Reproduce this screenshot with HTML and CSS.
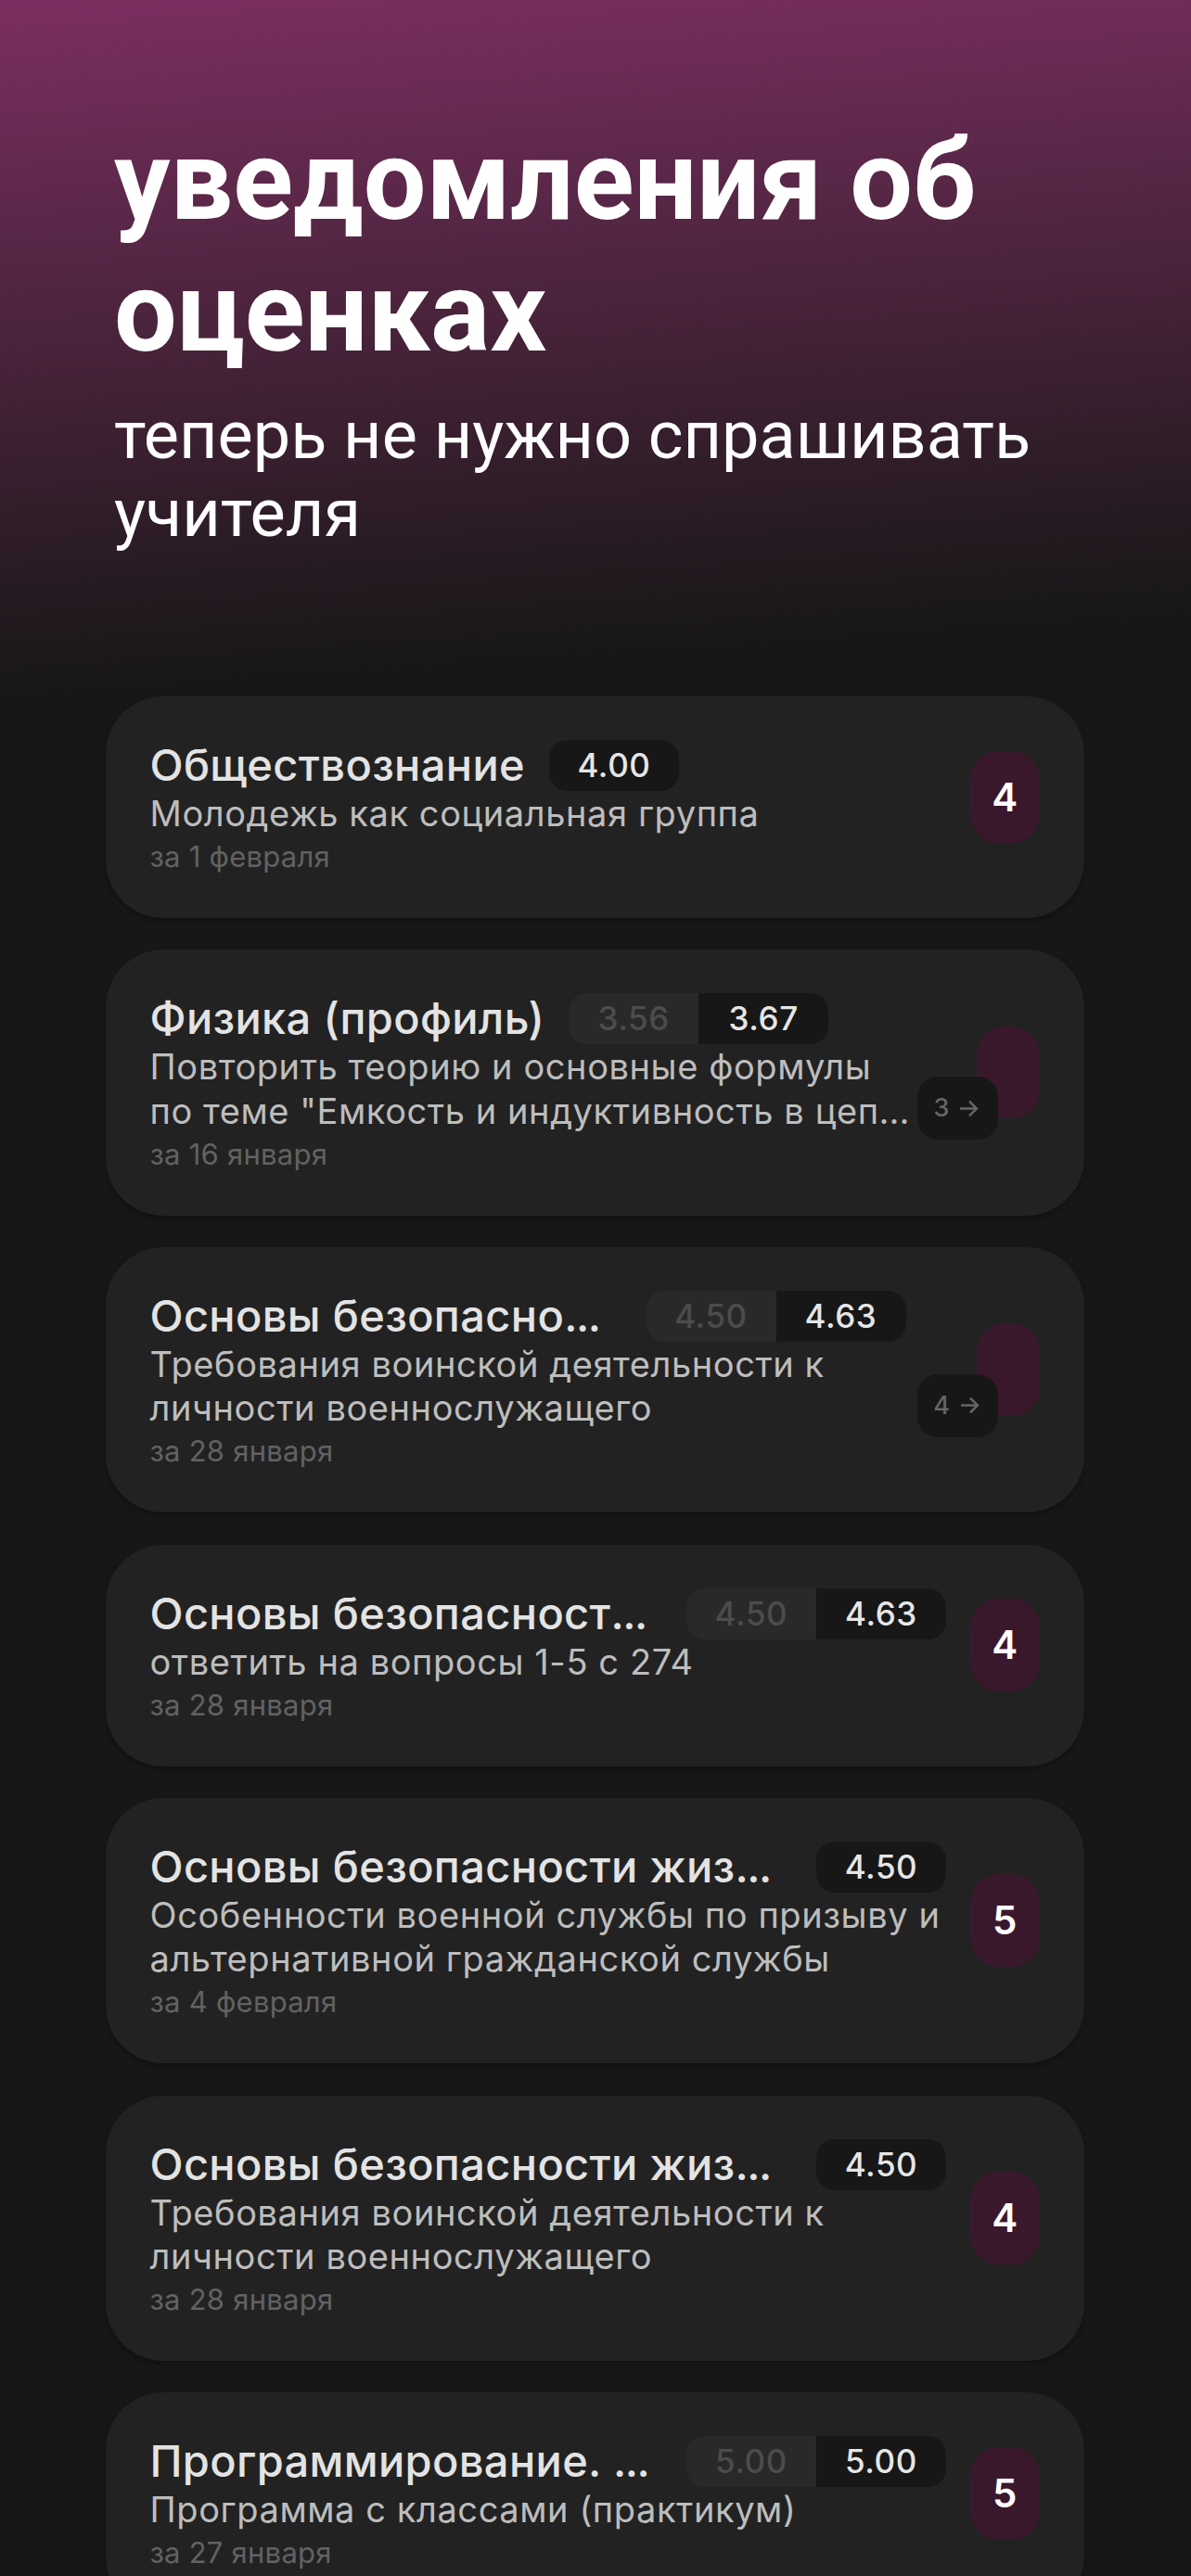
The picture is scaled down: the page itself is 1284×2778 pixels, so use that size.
FILE: index.html
```html
<!DOCTYPE html>
<html lang="ru">
<head>
<meta charset="utf-8">
<title>Уведомления об оценках</title>
<link rel="stylesheet" href="styles.css">
</head>
<body>
<main class="page">
  <header class="hero">
    <h1 class="hero-title">уведомления об<br>оценках</h1>
    <p class="hero-sub">теперь не нужно спрашивать<br>учителя</p>
  </header>
  <section class="list">
    <article class="card">
      <div class="info">
        <div class="head"><h2 class="subject">Обществознание</h2><div class="avg"><span class="now">4.00</span></div></div>
        <p class="topic">Молодежь как социальная группа</p>
        <p class="date">за 1 февраля</p>
      </div>
      <div class="mark">4</div>
    </article>
    <article class="card changed">
      <div class="info">
        <div class="head"><h2 class="subject">Физика (профиль)</h2><div class="avg"><span class="was">3.56</span><span class="now">3.67</span></div></div>
        <p class="topic">Повторить теорию и основные формулы<br>по теме "Емкость и индуктивность в цеп<span class="dots">...</span></p>
        <p class="date">за 16 января</p>
      </div>
      <div class="mark"><div class="old">3<svg class="arrow" viewBox="0 0 20 20"><path d="M1 10H18M10.5 2.5L18 10L10.5 17.5"/></svg></div></div>
    </article>
    <article class="card changed">
      <div class="info">
        <div class="head cut"><h2 class="subject">Основы безопасно<span class="dots">...</span></h2><div class="avg"><span class="was">4.50</span><span class="now">4.63</span></div></div>
        <p class="topic">Требования воинской деятельности к<br>личности военнослужащего</p>
        <p class="date">за 28 января</p>
      </div>
      <div class="mark"><div class="old">4<svg class="arrow" viewBox="0 0 20 20"><path d="M1 10H18M10.5 2.5L18 10L10.5 17.5"/></svg></div></div>
    </article>
    <article class="card">
      <div class="info">
        <div class="head cut"><h2 class="subject">Основы безопасност<span class="dots">...</span></h2><div class="avg"><span class="was">4.50</span><span class="now">4.63</span></div></div>
        <p class="topic">ответить на вопросы 1-5 с 274</p>
        <p class="date">за 28 января</p>
      </div>
      <div class="mark">4</div>
    </article>
    <article class="card">
      <div class="info">
        <div class="head cut"><h2 class="subject">Основы безопасности жиз<span class="dots">...</span></h2><div class="avg"><span class="now">4.50</span></div></div>
        <p class="topic">Особенности военной службы по призыву и<br>альтернативной гражданской службы</p>
        <p class="date">за 4 февраля</p>
      </div>
      <div class="mark">5</div>
    </article>
    <article class="card">
      <div class="info">
        <div class="head cut"><h2 class="subject">Основы безопасности жиз<span class="dots">...</span></h2><div class="avg"><span class="now">4.50</span></div></div>
        <p class="topic">Требования воинской деятельности к<br>личности военнослужащего</p>
        <p class="date">за 28 января</p>
      </div>
      <div class="mark">4</div>
    </article>
    <article class="card">
      <div class="info">
        <div class="head cut"><h2 class="subject">Программирование. <span class="dots">...</span></h2><div class="avg"><span class="was">5.00</span><span class="now">5.00</span></div></div>
        <p class="topic">Программа с классами (практикум)</p>
        <p class="date">за 27 января</p>
      </div>
      <div class="mark">5</div>
    </article>
  </section>
</main>
</body>
</html>
```

FILE: styles.css
```css
* { box-sizing: border-box; margin: 0; padding: 0; }

body { background: #171717; }

.page {
  width: 1284px;
  height: 2778px;
  overflow: hidden;
  background: linear-gradient(176deg, #7b2f60 0, #171717 750px) #171717;
  font-family: Inter, "Noto Sans", sans-serif;
}

.hero {
  height: 751px;
  padding: 125px 123px 0;
  font-family: Roboto, sans-serif;
  color: #fff;
  white-space: nowrap;
}
.hero-title { font-size: 120px; line-height: 141.6px; font-weight: 700; }
.hero-sub { margin-top: 20px; font-size: 72px; line-height: 84px; font-weight: 400; }

.list {
  display: flex;
  flex-direction: column;
  gap: 34.4px;
  padding: 0 115.5px 0 114px;
}

.card {
  display: flex;
  flex: none;
  align-items: center;
  gap: 25.5px;
  padding: 47px 47.5px 45px 47.5px;
  border-radius: 62px;
  background: #222;
  box-shadow: 0 3px 6px rgba(0, 0, 0, .3);
}
.changed { gap: 76px; }

.info { flex: 1; min-width: 0; white-space: nowrap; }

.head { display: flex; align-items: center; gap: 26px; height: 55px; }
.cut { justify-content: space-between; gap: 0; }

.subject {
  padding-bottom: 2px;
  font-size: 47px;
  line-height: 53px;
  font-weight: 550;
  letter-spacing: .35px;
  color: #e3e3e3;
}
.subject .dots { letter-spacing: -1.5px; }

.avg {
  display: flex;
  overflow: hidden;
  height: 55px;
  border-radius: 20px;
  font-size: 35px;
  line-height: 55px;
  font-weight: 500;
  letter-spacing: .6px;
  text-align: center;
}
.avg span { width: 140px; }
.now { background: #171717; color: #e6e6e6; }
.was { background: #292929; color: #4c4c4c; }

.topic { padding-top: 1px; margin-bottom: -1px; font-size: 38px; line-height: 47.1px; letter-spacing: .58px; color: #bdbdbd; }
.topic .dots { letter-spacing: 0; }
.date { margin-top: 3px; font-size: 31px; line-height: 42px; letter-spacing: .25px; color: #626262; }

.mark {
  position: relative;
  flex: none;
  width: 75.5px;
  height: 99.5px;
  margin-bottom: 24px;
  border-radius: 31px;
  background: #3a182c;
  color: #fff;
  font-size: 42px;
  line-height: 99px;
  font-weight: 600;
  text-align: center;
}
.changed .mark { width: 68.5px; }

.old {
  position: absolute;
  left: -64px;
  bottom: -23px;
  display: flex;
  align-items: center;
  justify-content: center;
  gap: 11px;
  width: 87px;
  height: 68px;
  padding-right: 2px;
  border-radius: 22px;
  background: #171717;
  color: #656565;
  font-size: 27px;
  line-height: 68px;
  font-weight: 500;
}
.arrow { width: 21px; height: 21px; fill: none; stroke: #656565; stroke-width: 2.4; }
```
